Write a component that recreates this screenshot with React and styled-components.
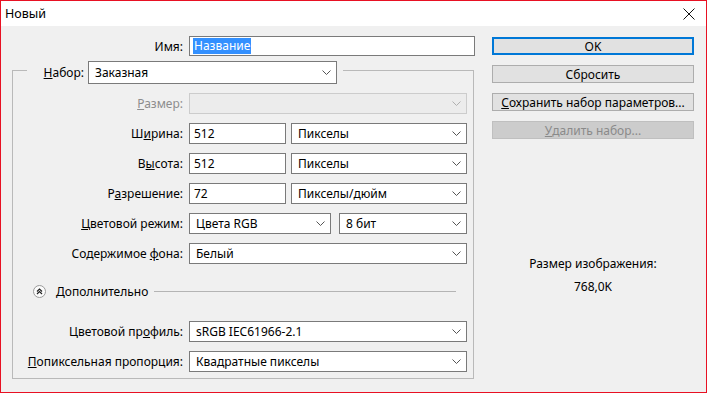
import React from "react";
import styled, { createGlobalStyle } from "styled-components";

const Global = createGlobalStyle`
html, body {
  margin:0;
  padding:0;
  background:#f0f0f0;
}
body {
  font-family:"Noto Sans", "Liberation Sans", sans-serif;
  font-size:12px;
  color:#000;
}
`;

const Window = styled.div`
width:707px;
height:393px;
box-sizing:border-box;
border:1px solid #e81123;
background:#f0f0f0;
display:flex;
flex-direction:column;
overflow:hidden;
`;

const TitleBar = styled.div`
height:25px;
flex:none;
background:#fff;
display:flex;
align-items:center;
justify-content:space-between;
padding-left:4px;
font-size:12.5px;
`;

const CloseButton = styled.div`
width:34px;
height:25px;
display:flex;
align-items:center;
justify-content:center;
`;

const Body = styled.div`
flex:1;
display:flex;
`;

const LeftCol = styled.div`
width:476px;
box-sizing:border-box;
padding:10px 0 0 11px;
display:flex;
flex-direction:column;
`;

const NameRow = styled.div`
display:grid;
grid-template-columns:171px 286px;
column-gap:6px;
align-items:center;
`;

const Label = styled.div`
text-align:right;
white-space:nowrap;
color:${({disabled}) => disabled ? '#8d8d8d' : '#000'};
`;

const Field = styled.div`
height:${({h}) => h || 21}px;
width:${({w}) => w ? `${w}px` : 'auto'};
flex:${({w}) => w ? 'none' : '1'};
box-sizing:border-box;
border:1px solid ${({disabled}) => disabled ? '#cccccc' : '#7a7a7a'};
background:${({disabled}) => disabled ? '#ececec' : '#fff'};
display:flex;
align-items:center;
padding:0 0 0 ${({pad}) => pad ?? 4}px;
white-space:nowrap;
overflow:hidden;
`;

const Selected = styled.span`
background:#3390ff;
color:#fff;
padding:0 1px;
line-height:16px;
`;

const SelectText = styled.span`
flex:1;
`;

const Chevron = styled.svg`
width:9px;
height:5px;
margin-right:5px;
flex:none;
`;

const Group = styled.div`
margin-top:14px;
width:462px;
box-sizing:border-box;
border:1px solid #b9b9b9;
padding:0 6px 6px 0;
display:flex;
flex-direction:column;
gap:9px;
`;

const Legend = styled.div`
display:flex;
align-items:center;
gap:4px;
margin:-10px 0 0 14px;
padding:0 6px;
background:#f0f0f0;
width:fit-content;
`;

const LegendLabel = styled(Label)`
width:51px;
`;

const Row = styled.div`
display:grid;
grid-template-columns:170px 1fr;
column-gap:6px;
align-items:center;
`;

const Controls = styled.div`
display:flex;
gap:${({gap}) => gap ?? 5}px;
`;

const Advanced = styled.div`
height:13px;
margin:12px 0 14px 20px;
display:flex;
align-items:center;
`;

const AdvancedText = styled.span`
margin-left:10px;
white-space:nowrap;
`;

const Rule = styled.div`
flex:1;
height:1px;
background:#b4b4b4;
margin:0 11px 0 6px;
`;

const RightCol = styled.div`
width:202px;
margin-left:15px;
padding-top:11px;
display:flex;
flex-direction:column;
gap:10px;
`;

const Button = styled.div`
height:18px;
box-sizing:border-box;
border:${({primary}) => primary ? '2px solid #0078d7' : '1px solid #adadad'};
background:${({disabled}) => disabled ? '#cccccc' : '#e1e1e1'};
color:${({disabled}) => disabled ? '#8a8a8a' : '#000'};
border-color:${({disabled, primary}) => primary ? '#0078d7' : disabled ? '#bfbfbf' : '#adadad'};
display:flex;
align-items:center;
justify-content:center;
white-space:nowrap;
`;

const SizeInfo = styled.div`
margin-top:107px;
display:flex;
flex-direction:column;
align-items:center;
gap:7px;
line-height:16px;
`;

const Select = ({children, w, h, disabled}) => (
    <Field w={w} h={h} disabled={disabled} pad={6}>
        <SelectText>{children}</SelectText>
        <Chevron viewBox="0 0 9 5">
            <polyline points="0.5,0.5 4.5,4.5 8.5,0.5" fill="none" stroke={disabled ? '#b0b0b0' : '#555'} strokeWidth="1"/>
        </Chevron>
    </Field>
);

const CollapseIcon = () => (
    <svg width="13" height="13" viewBox="0 0 13 13">
        <circle cx="6.5" cy="6.5" r="6" fill="#fbfbfb" stroke="#9a9a9a" strokeWidth="1"/>
        <polyline points="4,6.5 6.5,4 9,6.5" fill="none" stroke="#222" strokeWidth="1.2"/>
        <polyline points="4,9 6.5,6.5 9,9" fill="none" stroke="#222" strokeWidth="1.2"/>
    </svg>
);

const FormRow = ({label, children, disabled}) => (
    <Row>
        <Label disabled={disabled}>{label}</Label>
        <Controls>{children}</Controls>
    </Row>
);

const App = () => {
    return (
        <Window>
            <Global/>
            <TitleBar>
                <span>Новый</span>
                <CloseButton>
                    <svg width="12" height="12" viewBox="0 0 12 12">
                        <path d="M0.5,0.5 L11.5,11.5 M11.5,0.5 L0.5,11.5" stroke="#111" strokeWidth="1"/>
                    </svg>
                </CloseButton>
            </TitleBar>
            <Body>
                <LeftCol>
                    <NameRow>
                        <Label>Имя:</Label>
                        <Field h={20} pad={3}><Selected>Название</Selected></Field>
                    </NameRow>
                    <Group>
                        <Legend>
                            <LegendLabel><u>Н</u>абор:</LegendLabel>
                            <Select w={249} h={23}>Заказная</Select>
                        </Legend>
                        <FormRow label={<><u>Р</u>азмер:</>} disabled>
                            <Select disabled></Select>
                        </FormRow>
                        <FormRow label={<>Ш<u>и</u>рина:</>}>
                            <Field w={97}>512</Field>
                            <Select>Пикселы</Select>
                        </FormRow>
                        <FormRow label={<>В<u>ы</u>сота:</>}>
                            <Field w={97}>512</Field>
                            <Select>Пикселы</Select>
                        </FormRow>
                        <FormRow label={<>Р<u>а</u>зрешение:</>}>
                            <Field w={97}>72</Field>
                            <Select>Пикселы/дюйм</Select>
                        </FormRow>
                        <Row>
                            <Label><u>Ц</u>ветовой режим:</Label>
                            <Controls gap={8}>
                                <Select w={142}>Цвета RGB</Select>
                                <Select>8 бит</Select>
                            </Controls>
                        </Row>
                        <FormRow label={<>Содержимое <u>ф</u>она:</>}>
                            <Select>Белый</Select>
                        </FormRow>
                        <Advanced>
                            <CollapseIcon/>
                            <AdvancedText>Дополнительно</AdvancedText>
                            <Rule/>
                        </Advanced>
                        <FormRow label={<>Цветовой пр<u>о</u>филь:</>}>
                            <Select>sRGB IEC61966-2.1</Select>
                        </FormRow>
                        <FormRow label={<><u>П</u>опиксельная пропорция:</>}>
                            <Select>Квадратные пикселы</Select>
                        </FormRow>
                    </Group>
                </LeftCol>
                <RightCol>
                    <Button primary>OK</Button>
                    <Button>Сбросить</Button>
                    <Button><u>С</u>охранить набор параметров...</Button>
                    <Button disabled><u>У</u>далить набор...</Button>
                    <SizeInfo>
                        <span>Размер изображения:</span>
                        <span>768,0K</span>
                    </SizeInfo>
                </RightCol>
            </Body>
        </Window>
    );
};

export default App;
